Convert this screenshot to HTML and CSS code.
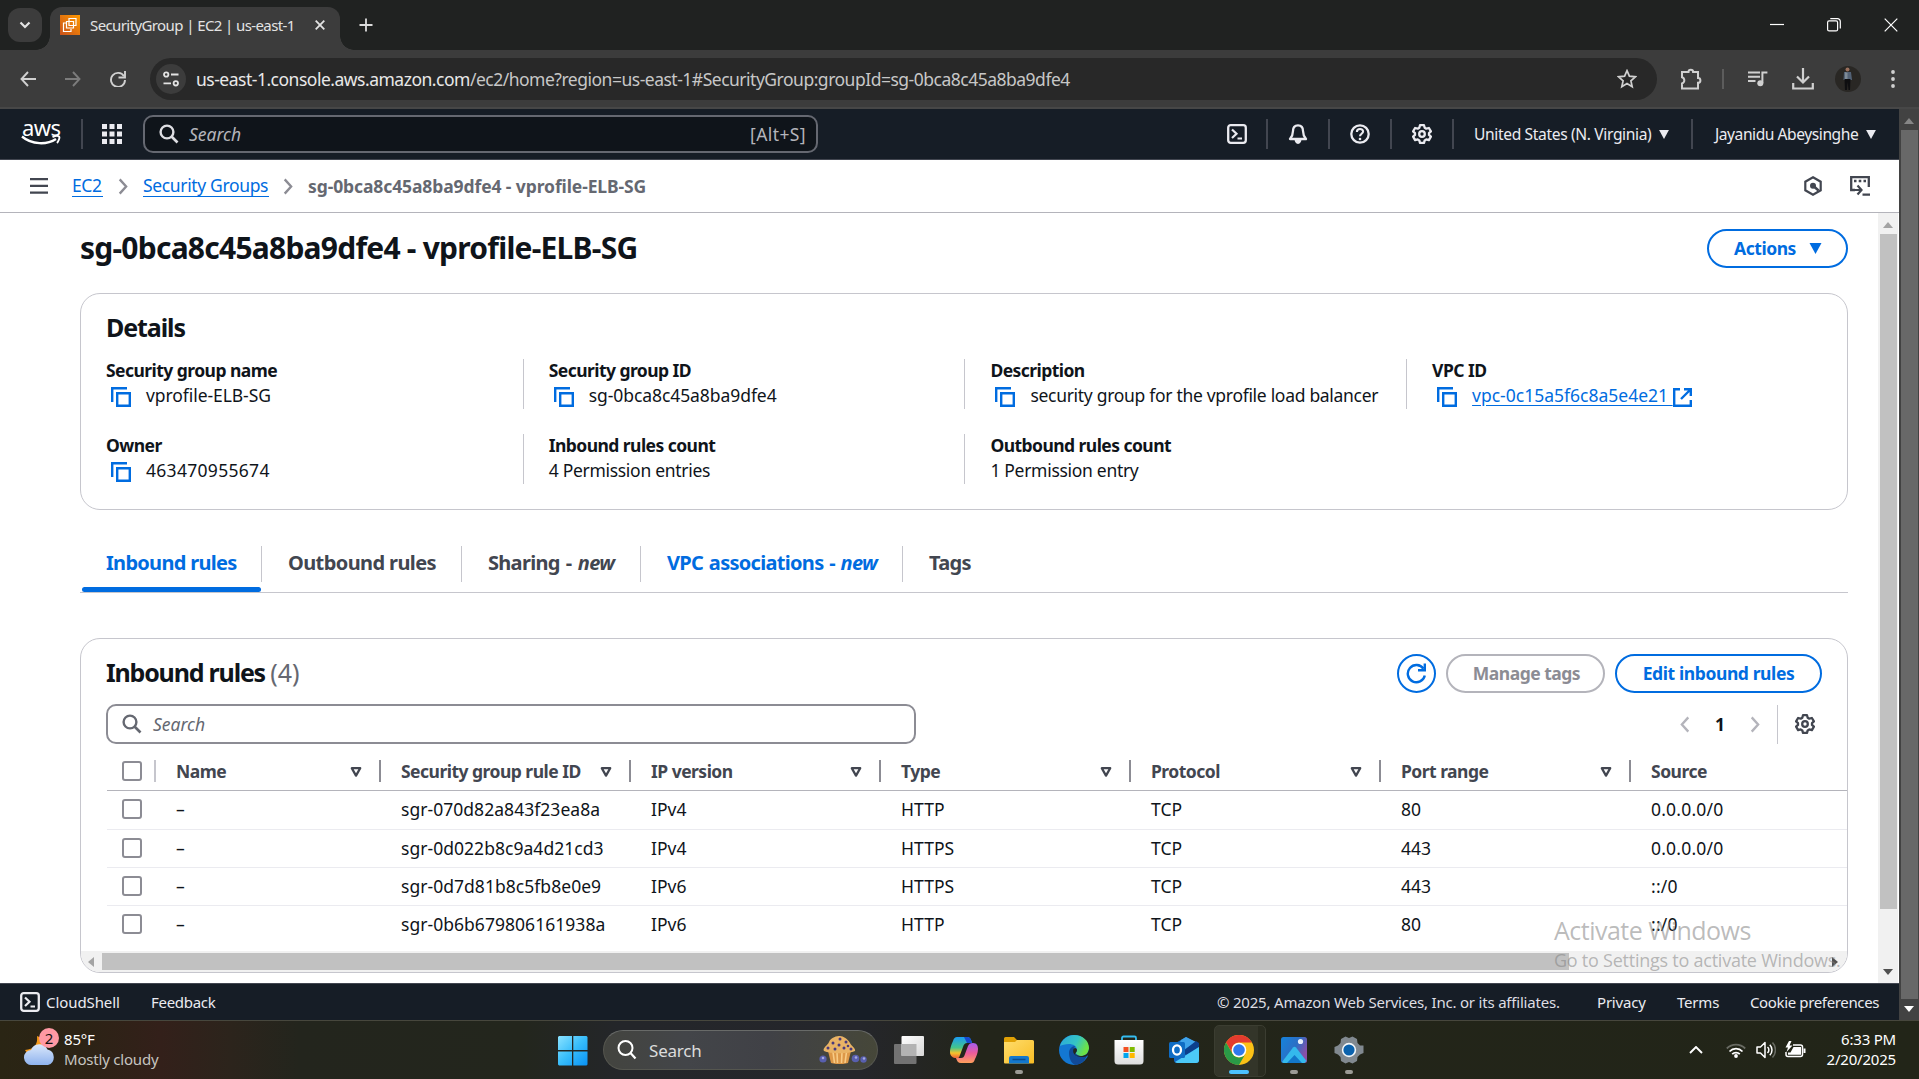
FILE: index.html
```html
<!DOCTYPE html>
<html lang="en">
<head>
<meta charset="utf-8">
<title>SecurityGroup | EC2 | us-east-1</title>
<link rel="stylesheet" href="styles.css">
</head>
<body>
<svg class="defs" width="0" height="0">
  <symbol id="copy" viewBox="0 0 20 20"><path d="M1.2 15V1.2H16" fill="none" stroke="currentColor" stroke-width="2.4"/><path d="M6.2 6.2h12.6v12.6H6.2z" fill="none" stroke="currentColor" stroke-width="2.4"/></symbol>
  <symbol id="search" viewBox="0 0 20 20"><circle cx="8" cy="8" r="6.4" fill="none" stroke="currentColor" stroke-width="2.4"/><path d="M12.5 12.5l6 6" stroke="currentColor" stroke-width="2.6"/></symbol>
  <symbol id="gear" viewBox="0 0 20 20"><path d="M8 1.2h4l.7 2.5 1.6 1 2.6-.7 2 3.4L17 9.200v1.700l1.900 1.800-2 3.400-2.600-.7-1.600 1-.7 2.500H8l-.7-2.500-1.600-1-2.600.7-2-3.400L3 10.900V9.200L1.100 7.400l2-3.400 2.600.7 1.600-1z" fill="none" stroke="currentColor" stroke-width="2.300" stroke-linejoin="round"/><circle cx="10" cy="10" r="2.800" fill="none" stroke="currentColor" stroke-width="2.300"/></symbol>
  <symbol id="shell" viewBox="0 0 20 20"><rect x="1.200" y="1.200" width="17.600" height="17.600" rx="2.500" fill="none" stroke="currentColor" stroke-width="2.300"/><path d="M5 5.500l4.500 4.300L5 14M10.500 14.500H15" fill="none" stroke="currentColor" stroke-width="2.200"/></symbol>
  <symbol id="down" viewBox="0 0 12 11"><path d="M0 0h12L6 11z" fill="currentColor"/></symbol>
  <symbol id="sort" viewBox="0 0 12 11"><path d="M1.800 1.200h8.400L6 8.600z" fill="none" stroke="currentColor" stroke-width="2.300" stroke-linejoin="round"/></symbol>
  <symbol id="chev" viewBox="0 0 10 18"><path d="M1.500 1.500L8.300 9l-6.800 7.500" fill="none" stroke="currentColor" stroke-width="2.500"/></symbol>
</svg>

<div class="screen">
  <header class="tabstrip">
    <div class="tab-search"><svg width="12" height="8" viewBox="0 0 12 8"><path d="M1.500 1.500L6 6l4.500-4.500" fill="none" stroke="#e3e3e3" stroke-width="2.200"/></svg></div>
    <div class="tab">
      <svg class="favicon" width="20" height="20" viewBox="0 0 20 20"><defs><linearGradient id="fav" x1="0" y1="1" x2="1" y2="0"><stop stop-color="#c8511b"/><stop offset="1" stop-color="#f90"/></linearGradient></defs><path d="M0 0h20v20H0z" fill="url(#fav)"/><path d="M9 3.500h7v7H9zM6.500 6.500h7v6.500h-7zM6 8H3.500v8.500H11V14" fill="none" stroke="#fff" stroke-width="1.200"/></svg>
      <span class="tab-title">SecurityGroup | EC2 | us-east-1</span>
      <svg class="tab-close" width="10" height="10" viewBox="0 0 10 10"><path d="M.7.7l8.600 8.600M9.300.7L.7 9.300" stroke="#e3e3e3" stroke-width="1.800"/></svg>
    </div>
    <svg class="new-tab" width="14" height="14" viewBox="0 0 14 14"><path d="M7 .5v13M.5 7h13" stroke="#dcdcdc" stroke-width="1.800"/></svg>
    <div class="window-buttons">
      <svg width="14" height="14" viewBox="0 0 14 14"><path d="M0 6.500h14" stroke="#fff" stroke-width="1.200"/></svg>
      <svg width="14" height="14" viewBox="0 0 14 14"><rect x=".6" y="2.900" width="10" height="10" rx="1.500" fill="none" stroke="#fff" stroke-width="1.200"/><path d="M3.300.7h7.200a2.700 2.700 0 0 1 2.800 2.700v7.200" fill="none" stroke="#fff" stroke-width="1.200"/></svg>
      <svg width="14" height="14" viewBox="0 0 14 14"><path d="M.7.7l12.600 12.600M13.300.7L.7 13.300" stroke="#fff" stroke-width="1.200"/></svg>
    </div>
  </header>

  <div class="toolbar">
    <svg class="nav-icon" width="16" height="16" viewBox="0 0 16 16"><path d="M8 1L1.500 8 8 15M1.500 8H16" fill="none" stroke="#d0d0d0" stroke-width="1.900"/></svg>
    <svg class="nav-icon dim" width="16" height="16" viewBox="0 0 16 16"><path d="M8 1l6.500 7L8 15M14.500 8H0" fill="none" stroke="#7c7c7c" stroke-width="1.900"/></svg>
    <svg class="nav-icon" width="16" height="16" viewBox="0 0 16 16"><path d="M14 5.300A7 7 0 1 0 15 9" fill="none" stroke="#d0d0d0" stroke-width="1.900"/><path d="M15 0v6.500H8.500" fill="none" stroke="#d0d0d0" stroke-width="1.900"/></svg>
    <div class="omnibox">
      <div class="site-info"><svg width="16" height="16" viewBox="0 0 16 16"><g fill="none" stroke="#e3e3e3" stroke-width="1.800"><circle cx="3.200" cy="3.500" r="2.200"/><path d="M8 3.500h7.500M.5 12.300H8"/><circle cx="12.800" cy="12.300" r="2.200"/></g></svg></div>
      <span class="url">us-east-1.console.aws.amazon.com<span class="url-path">/ec2/home?region=us-east-1#SecurityGroup:groupId=sg-0bca8c45a8ba9dfe4</span></span>
      <svg class="star" width="20" height="20" viewBox="0 0 20 20"><path d="M10 1.700l2.400 5.500 6 .6-4.500 4 1.300 5.900L10 14.600l-5.200 3.100 1.300-5.900-4.500-4 6-.6z" fill="none" stroke="#d0d0d0" stroke-width="1.700"/></svg>
    </div>
    <svg class="ext" width="22" height="22" viewBox="0 0 22 22"><path d="M2 4h6.500a2.300 2.300 0 0 1 4.600 0H18v6a2.400 2.400 0 0 1 0 4.800V20.500H2v-5a3.300 3.300 0 0 0 0-6.300z" fill="none" stroke="#d0d0d0" stroke-width="2"/></svg>
    <i class="tool-divider"></i>
    <svg class="music" width="20" height="16" viewBox="0 0 20 16"><path d="M0 1.500h12M0 5.700h12M0 9.900h7.500" stroke="#d0d0d0" stroke-width="2"/><circle cx="12.300" cy="12.300" r="3" fill="#d0d0d0"/><path d="M14.400 12V1.500h5" fill="none" stroke="#d0d0d0" stroke-width="2"/></svg>
    <svg class="download" width="22" height="22" viewBox="0 0 22 22"><path d="M11 0v14M5 8.500l6 6 6-6M1.200 15v5.500h19.600V15" fill="none" stroke="#d0d0d0" stroke-width="2.200"/></svg>
    <svg class="avatar" width="26" height="26" viewBox="0 0 26 26"><circle cx="13" cy="13" r="13" fill="#292724"/><circle cx="12.500" cy="3.500" r="2" fill="#99705d"/><path d="M9 6h7l1 8H8.500z" fill="#536276"/><path d="M10 6l2.500 1v6H10z" fill="#7f8c98"/><path d="M9.500 13h6l-.5 11h-1.500l-.8-8-.7 8h-2z" fill="#0e0e10"/></svg>
    <svg class="dots" width="4" height="18" viewBox="0 0 4 18"><g fill="#d0d0d0"><circle cx="2" cy="2" r="1.900"/><circle cx="2" cy="9" r="1.900"/><circle cx="2" cy="16" r="1.900"/></g></svg>
  </div>

  <div class="viewport">
    <div class="console">
      <nav class="aws-nav">
        <div class="aws-logo"><span>aws</span><svg width="40" height="11" viewBox="0 0 40 11"><path d="M1 1.500c10 8.500 25 8.500 34 2.500" fill="none" stroke="#fff" stroke-width="2.300"/><path d="M31.500 2c3-1.200 6-1.200 6.700-.3.700 1-.6 4.500-2.200 6.300" fill="none" stroke="#fff" stroke-width="1.900"/></svg></div>
        <i class="nav-rule first"></i>
        <svg class="apps" width="20" height="20" viewBox="0 0 20 20"><path d="M0 0h5v5H0zM7.500 0h5v5h-5zM15 0h5v5h-5zM0 7.500h5v5H0zM7.500 7.500h5v5h-5zM15 7.500h5v5h-5zM0 15h5v5H0zM7.500 15h5v5h-5zM15 15h5v5h-5z" fill="#ebebf0"/></svg>
        <div class="nav-search"><svg width="20" height="20"><use href="#search"/></svg><em>Search</em><span>[Alt+S]</span></div>
        <div class="nav-tools">
          <div class="tool"><svg width="20" height="20"><use href="#shell"/></svg></div>
          <div class="tool"><svg width="20" height="20" viewBox="0 0 20 20"><path d="M10 1.300c3.600 0 5 2.700 5 5.700 0 4 1 5.500 3 8H2c2-2.500 3-4 3-8 0-3 1.400-5.700 5-5.700z" fill="none" stroke="currentColor" stroke-width="2.300" stroke-linejoin="round"/><path d="M6.500 15.500c.3 2.300 1.300 4.500 3.500 4.500s3.200-2.200 3.500-4.500z" fill="currentColor"/></svg></div>
          <div class="tool"><svg width="20" height="20" viewBox="0 0 20 20"><circle cx="10" cy="10" r="8.700" fill="none" stroke="currentColor" stroke-width="2.300"/><path d="M6.900 8c0-4 6.200-4 6.200-.4 0 2-3.100 2.400-3.100 4.600" fill="none" stroke="currentColor" stroke-width="2.100"/><circle cx="10" cy="15" r="1.300" fill="currentColor"/></svg></div>
          <div class="tool"><svg width="20" height="20"><use href="#gear"/></svg></div>
          <div class="menu region"><span>United States (N. Virginia)</span><svg width="10" height="9"><use href="#down"/></svg></div>
          <div class="menu account"><span>Jayanidu Abeysinghe</span><svg width="10" height="9"><use href="#down"/></svg></div>
        </div>
      </nav>

      <div class="crumbs">
        <svg class="burger" width="18" height="16" viewBox="0 0 18 16"><path d="M0 1.200h18M0 7.900h18M0 14.600h18" stroke="#424650" stroke-width="2.300"/></svg>
        <a class="crumb-ec2">EC2</a>
        <svg class="sep" width="10" height="17"><use href="#chev"/></svg>
        <a class="crumb-groups">Security Groups</a>
        <svg class="sep" width="10" height="17"><use href="#chev"/></svg>
        <b>sg-0bca8c45a8ba9dfe4 - vprofile-ELB-SG</b>
        <svg class="hex" width="18" height="20" viewBox="0 0 18 20"><path d="M9 1.300l7.700 4.400v8.600L9 18.700l-7.700-4.400V5.700z" fill="none" stroke="#424650" stroke-width="2.200"/><circle cx="9" cy="9.800" r="3" fill="#424650"/><path d="M10 10.500l4.500 4" stroke="#424650" stroke-width="2.400"/></svg>
        <svg class="split" width="20" height="20" viewBox="0 0 20 20"><path d="M18.800 11V1.200H1.200V14H5" fill="none" stroke="#424650" stroke-width="2.300"/><path d="M4 5h2.500M8.700 5h2.600M13.500 5H16" stroke="#424650" stroke-width="2.500"/><path d="M4 14h7M7.500 9.500l4 4.500-4 4.500M12.500 18.700H20" fill="none" stroke="#424650" stroke-width="2.200"/></svg>
      </div>

      <div class="scroller">
        <main>
          <div class="title-row"><h1>sg-0bca8c45a8ba9dfe4 - vprofile-ELB-SG</h1><button class="btn actions"><span>Actions</span><svg width="13" height="11"><use href="#down"/></svg></button></div>

          <section class="card details">
            <h2>Details</h2>
            <div class="facts">
              <div class="fact"><b>Security group name</b><p><svg width="20" height="20"><use href="#copy"/></svg>vprofile-ELB-SG</p></div>
              <div class="fact"><b>Security group ID</b><p><svg width="20" height="20"><use href="#copy"/></svg>sg-0bca8c45a8ba9dfe4</p></div>
              <div class="fact"><b>Description</b><p class="words"><svg width="20" height="20"><use href="#copy"/></svg>security group for the vprofile load balancer</p></div>
              <div class="fact"><b>VPC ID</b><p class="link"><svg width="20" height="20"><use href="#copy"/></svg><a>vpc-0c15a5f6c8a5e4e21&nbsp;</a><svg class="external" width="19" height="19" viewBox="0 0 19 19"><path d="M7 1.200H1.200v16.600h16.600V12M11 1.200h6.800V8M17.500 1.500L8 11" fill="none" stroke="currentColor" stroke-width="2.400"/></svg></p></div>
              <div class="fact"><b>Owner</b><p class="number"><svg width="20" height="20"><use href="#copy"/></svg>463470955674</p></div>
              <div class="fact"><b>Inbound rules count</b><p class="words">4 Permission entries</p></div>
              <div class="fact"><b>Outbound rules count</b><p class="words">1 Permission entry</p></div>
            </div>
          </section>

          <div class="tabs">
            <a class="t1 active">Inbound rules</a><a class="t2">Outbound rules</a><a class="t3">Sharing - <i>new</i></a><a class="t4">VPC associations - <i>new</i></a><a class="t5">Tags</a>
          </div>

          <section class="card rules">
            <div class="rules-head">
              <h2>Inbound rules <span>(4)</span></h2>
              <button class="btn round"><svg width="21" height="21" viewBox="0 0 21 21"><path d="M18.800 12.500A8.600 8.600 0 1 1 17.500 5.800" fill="none" stroke="currentColor" stroke-width="2.400"/><path d="M18.800.500v6.700H12" fill="none" stroke="currentColor" stroke-width="2.400"/></svg></button>
              <button class="btn manage">Manage tags</button>
              <button class="btn edit">Edit inbound rules</button>
            </div>
            <div class="filter-row">
              <div class="filter"><svg width="20" height="20"><use href="#search"/></svg><em>Search</em></div>
              <div class="pager"><svg class="prev" width="10" height="17"><use href="#chev"/></svg><b>1</b><svg width="10" height="17"><use href="#chev"/></svg></div>
              <div class="prefs"><svg width="20" height="20"><use href="#gear"/></svg></div>
            </div>
            <div class="grid">
              <div class="row head"><span class="check"><i></i></span><span>Name<svg width="12" height="11"><use href="#sort"/></svg></span><span>Security group rule ID<svg width="12" height="11"><use href="#sort"/></svg></span><span>IP version<svg width="12" height="11"><use href="#sort"/></svg></span><span>Type<svg width="12" height="11"><use href="#sort"/></svg></span><span>Protocol<svg width="12" height="11"><use href="#sort"/></svg></span><span>Port range<svg width="12" height="11"><use href="#sort"/></svg></span><span>Source</span></div>
              <div class="row first"><span class="check"><i></i></span><span>–</span><span>sgr-070d82a843f23ea8a</span><span>IPv4</span><span>HTTP</span><span>TCP</span><span>80</span><span>0.0.0.0/0</span></div>
              <div class="row"><span class="check"><i></i></span><span>–</span><span>sgr-0d022b8c9a4d21cd3</span><span>IPv4</span><span>HTTPS</span><span>TCP</span><span>443</span><span>0.0.0.0/0</span></div>
              <div class="row"><span class="check"><i></i></span><span>–</span><span>sgr-0d7d81b8c5fb8e0e9</span><span>IPv6</span><span>HTTPS</span><span>TCP</span><span>443</span><span>::/0</span></div>
              <div class="row"><span class="check"><i></i></span><span>–</span><span>sgr-0b6b679806161938a</span><span>IPv6</span><span>HTTP</span><span>TCP</span><span>80</span><span>::/0</span></div>
            </div>
            <div class="hscroll"><svg width="6" height="10" viewBox="0 0 6 10"><path d="M6 0v10L0 5z" fill="#a3a3a3"/></svg><i></i><svg width="6" height="10" viewBox="0 0 6 10"><path d="M0 0v10l6-5z" fill="#505050"/></svg></div>
          </section>
        </main>
        <div class="vscroll inner"><svg width="10" height="6" viewBox="0 0 10 6"><path d="M0 6h10L5 0z" fill="#a3a3a3"/></svg><i></i><svg width="10" height="6" viewBox="0 0 10 6"><path d="M0 0h10L5 6z" fill="#505050"/></svg></div>
      </div>

      <footer>
        <svg width="20" height="20"><use href="#shell"/></svg><span class="f-shell">CloudShell</span><span class="f-feedback">Feedback</span>
        <span class="f-copy">© 2025, Amazon Web Services, Inc. or its affiliates.</span><span class="f-privacy">Privacy</span><span class="f-terms">Terms</span><span class="f-cookie">Cookie preferences</span>
      </footer>
    </div>
    <div class="vscroll outer"><svg width="10" height="6" viewBox="0 0 10 6"><path d="M0 6h10L5 0z" fill="#868686"/></svg><i></i><svg width="10" height="6" viewBox="0 0 10 6"><path d="M0 0h10L5 6z" fill="#fff"/></svg></div>
  </div>

  <div class="taskbar">
    <div class="weather">
      <svg width="36" height="38" viewBox="0 0 36 38"><defs><linearGradient id="cl" x1="0" y1="0" x2="0" y2="1"><stop stop-color="#dbe8fb"/><stop offset="1" stop-color="#8fb3ee"/></linearGradient></defs><path d="M13 7c1 9-3 13-12 14 3 6 11 8 16 4s6-14-4-18z" fill="#f59a1b"/><path d="M8 36a7.500 7.500 0 0 1-1-15 9 9 0 0 1 16.500-.5A8 8 0 0 1 24 36z" fill="url(#cl)"/></svg>
      <b class="badge">2</b>
      <div class="weather-text"><span>85°F</span><span class="muted">Mostly cloudy</span></div>
    </div>
    <svg class="start" width="30" height="30" viewBox="0 0 30 30"><defs><linearGradient id="win" x1="0" y1="0" x2="29" y2="29" gradientUnits="userSpaceOnUse"><stop stop-color="#8be3ff"/><stop offset=".5" stop-color="#38bdfb"/><stop offset="1" stop-color="#0a93f5"/></linearGradient></defs><path d="M1 0H14v14H0V1zM15.300 0H28.500l1 1V14H15.300zM0 15.400h14v14H1l-1-1zM15.300 15.400h14.200v13l-1 1H15.300z" fill="url(#win)"/></svg>
    <div class="task-search">
      <svg width="20" height="20" viewBox="0 0 20 20"><circle cx="8.500" cy="8" r="7" fill="none" stroke="#fff" stroke-width="2"/><path d="M13.500 13l5 5.500" stroke="#fff" stroke-width="2.200"/></svg><span>Search</span>
      <svg class="muffin" width="48" height="28" viewBox="0 0 48 28"><path d="M9 15h23l-3 12c-4 1.500-13 1.500-17 0z" fill="#dd9848"/><path d="M14 16l1.500 11M18 16l.5 11M23 16l-.5 11M27.500 16L26 27" stroke="#f8cb86" stroke-width="1.600"/><path d="M5 15C3 12 9 9 10 6c2-5 8-6 11-6s8 3 10 7c1 3 6 5 5 8-6 3-25 3-31 0z" fill="#e9b365"/><g fill="#4b3b7c"><circle cx="14" cy="7" r="1.500"/><circle cx="21" cy="3" r="1.500"/><circle cx="20" cy="9" r="1.500"/><circle cx="27" cy="6" r="1.500"/><circle cx="9" cy="12" r="1.500"/><circle cx="16" cy="13" r="1.500"/><circle cx="25" cy="12" r="1.500"/><circle cx="32" cy="13" r="1.500"/><circle cx="29" cy="10" r="1.300"/></g><g fill="#585fae"><circle cx="4" cy="23" r="3.600"/><circle cx="36.500" cy="22.500" r="3.800"/><circle cx="44.500" cy="23.500" r="3.200"/></g><g fill="#a5a9e2"><circle cx="4" cy="22" r="1.300"/><circle cx="37" cy="21.500" r="1.300"/><circle cx="45" cy="22.500" r="1.200"/></g></svg>
    </div>
    <div class="apps-row">
      <div class="app"><svg width="30" height="30" viewBox="0 0 30 30"><defs><linearGradient id="tv" x1="0" y1="0" x2="1" y2="1"><stop stop-color="#fff"/><stop offset="1" stop-color="#d7d7d7"/></linearGradient></defs><rect x="0" y="9" width="22.500" height="20" rx="1" fill="#727272"/><rect x="7.500" y="1" width="22.500" height="20" rx="1" fill="url(#tv)"/><path d="M7.500 9h15v12h-15z" fill="#b3b3b3"/></svg></div>
      <div class="app"><svg width="30" height="30" viewBox="0 0 30 30"><defs><linearGradient id="cp1" x1="0" y1="0" x2="0" y2="1"><stop stop-color="#1b9cf3"/><stop offset=".5" stop-color="#44c58b"/><stop offset=".75" stop-color="#f5c42c"/><stop offset="1" stop-color="#ef5b3a"/></linearGradient><linearGradient id="cp2" x1="0" y1="0" x2="0" y2="1"><stop stop-color="#a45cf0"/><stop offset=".5" stop-color="#ed5a9b"/><stop offset="1" stop-color="#ffa05a"/></linearGradient></defs><path d="M8 2h10c3 0 4 2 5 6h-5c-2 0-3 1-4 4l-3 8c-1 3-2 4-4 3-3 0-6-2-6-6 0-4 2-9 3-11C5 3 6 2 8 2z" fill="url(#cp1)"/><path d="M15 2h3c3 0 4 2 5 6h-5z" fill="#174ad0"/><path d="M22 28H12c-3 0-4-2-5-5h5c2 0 3-1 4-4l3-8c1-2 2-3 5-3 4 0 5 3 5 6 0 4-2 8-3 10-1 3-2 4-4 4z" fill="url(#cp2)"/></svg></div>
      <div class="app running"><svg width="30" height="30" viewBox="0 0 30 30"><defs><linearGradient id="fo" x1="0" y1="0" x2="1" y2="1"><stop stop-color="#ffdd6c"/><stop offset="1" stop-color="#f8bd25"/></linearGradient></defs><path d="M0 3.500A1.500 1.500 0 0 1 1.500 2H10l3 3v6H0z" fill="#e0a105"/><path d="M0 7h11l2-2h15.500A1.500 1.500 0 0 1 30 6.500v21a1 1 0 0 1-1 1H1a1 1 0 0 1-1-1z" fill="url(#fo)"/><path d="M5 28.500V23a2 2 0 0 1 2-2h16a2 2 0 0 1 2 2v5.500z" fill="#1378cd"/><path d="M8.500 24.500h13" stroke="#0a4c8f" stroke-width="1.500"/></svg></div>
      <div class="app"><svg width="30" height="30" viewBox="0 0 30 30"><defs><linearGradient id="ed" x1="0" y1="0" x2="1" y2=".4"><stop stop-color="#2ba7dd"/><stop offset=".6" stop-color="#35c4c4"/><stop offset="1" stop-color="#6de246"/></linearGradient></defs><circle cx="15" cy="15" r="15" fill="#1377d2"/><path d="M1 11C3 4 9 0 15 0c9 0 15 6 15 13 0 5-4 8-8 8-4 0-6-1-6-2 0-1 2-1.500 2-4 0-4-4-6-8-6-4 0-7 1-9 2z" fill="url(#ed)"/><path d="M10 18c0-4 3-7 6-7-1 2-1 4 0 6 2 4 7 6 12 3.500C26 26 21 30 16 30c-4-2-6-7-6-12z" fill="#114a98"/><path d="M14.500 14c-1.500 4 1.500 8 8.500 8 2 0 4-.5 5.500-1.500l1.500.5V14c-1 5-4 7-8 7-4 0-6-1-6-2 0-1 2-1.500 2-4 0-1-1-2-2-2z" fill="#23251b"/></svg></div>
      <div class="app"><svg width="30" height="30" viewBox="0 0 30 30"><defs><linearGradient id="st" x1="0" y1="0" x2="0" y2="1"><stop stop-color="#fff"/><stop offset="1" stop-color="#dedede"/></linearGradient></defs><path d="M8 6V3a1.500 1.500 0 0 1 1.500-1.500h11A1.500 1.500 0 0 1 22 3v3" fill="none" stroke="#35bdf0" stroke-width="1.800"/><path d="M.5 5h29v21a3.500 3.500 0 0 1-3.500 3.500H4A3.500 3.500 0 0 1 .5 26z" fill="url(#st)"/><path d="M9.500 12h5v5h-5z" fill="#f25022"/><path d="M15.700 12h5v5h-5z" fill="#7fba00"/><path d="M9.500 18h5v5h-5z" fill="#00a4ef"/><path d="M15.700 18h5v5h-5z" fill="#ffb900"/></svg></div>
      <div class="app"><svg width="30" height="30" viewBox="0 0 30 30"><path d="M5 9L17 2l13 7v16a3 3 0 0 1-3 3H8a3 3 0 0 1-3-3z" fill="#1169c4"/><path d="M12 5l5-3 10 5-14 9-4-5z" fill="#3fa3ea"/><path d="M13 17L27 6l3 2v4L17 20z" fill="#0c3f8c"/><path d="M6 27l24-15v13a3 3 0 0 1-3 3H8z" fill="#4cc9f7"/><rect x="0" y="7" width="16" height="16" rx="1.500" fill="#0f6cc4"/><ellipse cx="8" cy="15" rx="4" ry="4.700" fill="none" stroke="#fff" stroke-width="2.300"/></svg></div>
      <div class="app current"><svg width="30" height="30" viewBox="0 0 30 30"><circle cx="15" cy="15" r="15" fill="#fbc116"/><path d="M2 7.500A15 15 0 0 1 28 7.500H15a7.500 7.500 0 0 0-6.500 11z" fill="#e33b2e"/><path d="M2 7.500L8.500 18.800A7.500 7.500 0 0 0 21.500 18.800L15 30A15 15 0 0 1 2 7.500z" fill="#2a9a47"/><circle cx="15" cy="15" r="7.300" fill="#fff"/><circle cx="15" cy="15" r="5.800" fill="#3079ed"/></svg></div>
      <div class="app running"><svg width="30" height="30" viewBox="0 0 30 30"><defs><linearGradient id="ph" x1="0" y1="0" x2="1" y2=".5"><stop stop-color="#1583dc"/><stop offset=".6" stop-color="#2c6ec4"/><stop offset="1" stop-color="#8a4fa8"/></linearGradient></defs><rect x="2" y="2" width="26" height="26" rx="2.500" fill="url(#ph)"/><path d="M3 27L14 12.500a2 2 0 0 1 3 0L27.500 26l-2 2h-21z" fill="#34b9ec"/><path d="M8 28l7.500-8 7.500 8z" fill="#1377c9"/><circle cx="21.500" cy="6.500" r="2.600" fill="#e7effb"/></svg></div>
      <div class="app running"><svg width="30" height="30" viewBox="0 0 30 30"><path d="M11.500 1.500L15 3l3.500-1.500 4.500 2.500.5 4 2.500 2.500h3.500v7.500L26 19.500 23.500 22l-.5 4-4.500 2.500L15 27l-3.500 1.500L7 26l-.5-4L4 19.500.5 18v-6L4 10.500 6.500 8 7 4z" fill="#818990"/><circle cx="15" cy="15" r="7.200" fill="#f4f8fb"/><circle cx="15" cy="15" r="5.600" fill="#0b62ad"/></svg></div>
    </div>
    <div class="tray">
      <svg width="14" height="8" viewBox="0 0 14 8"><path d="M1 7l6-6 6 6" fill="none" stroke="#fff" stroke-width="1.900"/></svg>
      <svg class="wifi" width="20" height="15" viewBox="0 0 20 15"><g fill="none" stroke-width="1.800"><path d="M.8 5.500a13 13 0 0 1 18.400 0" stroke="#686a62"/><path d="M3.500 8.500a9 9 0 0 1 13 0M6.200 11.200a5.300 5.300 0 0 1 7.600 0" stroke="#fff"/></g><circle cx="10" cy="13" r="1.900" fill="#fff"/></svg>
      <svg class="speaker" width="20" height="18" viewBox="0 0 20 18"><path d="M1 6h3.500L9 1.500v15L4.500 12H1z" fill="none" stroke="#fff" stroke-width="1.500" stroke-linejoin="round"/><path d="M11.500 6a4 4 0 0 1 0 6M13.800 3.700a7.500 7.500 0 0 1 0 10.600" fill="none" stroke="#fff" stroke-width="1.500"/><path d="M16.500 1.500a11 11 0 0 1 0 15" fill="none" stroke="#686a62" stroke-width="1.500"/></svg>
      <svg class="battery" width="21" height="18" viewBox="0 0 21 18"><path d="M8 4h7.500A2 2 0 0 1 17.500 6v7.500a2 2 0 0 1-2 2H3a2 2 0 0 1-2-2V11" fill="none" stroke="#fff" stroke-width="1.500"/><path d="M8.500 6H16v7.700H3V11.500h2.500z" fill="#fff"/><path d="M19.500 7.500v4.500" stroke="#fff" stroke-width="2"/><path d="M4 0L.5 6.500H3L1.500 11 7.500 4.500H4.500L6.500 0z" fill="#fff"/></svg>
      <div class="clock"><span>6:33 PM</span><span>2/20/2025</span></div>
    </div>
  </div>

  <div class="watermark"><span class="w1">Activate Windows</span><span class="w2">Go to Settings to activate Windows.</span></div>
</div>
</body>
</html>
```
FILE: styles.css
```css
* { box-sizing: border-box; }
body { margin: 0; overflow: hidden; font-family: "Noto Sans", sans-serif; font-size: 17.5px; color: #0f141a; }
svg { display: block; flex: none; }
.defs { position: absolute; }
button { font: inherit; }
h1, h2, p { margin: 0; }
.screen { position: relative; width: 1919px; height: 1079px; display: flex; flex-direction: column; white-space: nowrap; background: #fff; }

/* Browser chrome */
.tabstrip { height: 50px; background: #202221; display: flex; align-items: flex-end; padding-left: 8px; color: #e3e3e3; }
.tab-search { width: 34px; height: 34px; margin-bottom: 8px; border-radius: 12px; background: #3c3c3c; display: flex; align-items: center; justify-content: center; }
.tab { position: relative; width: 290px; height: 43px; margin-left: 8px; border-radius: 12px 12px 0 0; background: #3c3c3c; display: flex; align-items: center; padding: 0 15px 7px 10px; }
.tab::before, .tab::after { content: ""; position: absolute; bottom: 0; width: 14px; height: 14px; }
.tab::before { left: -14px; background: radial-gradient(circle at 0 0, transparent 13.5px, #3c3c3c 14px); }
.tab::after { right: -14px; background: radial-gradient(circle at 100% 0, transparent 13.5px, #3c3c3c 14px); }
.tab-title { margin-left: 10px; flex: 1; font-size: 15px; letter-spacing: -.6px; }
.new-tab { margin: 0 0 18px 19px; }
.window-buttons { margin-left: auto; display: flex; gap: 43px; padding: 0 21px 18px 0; }
.toolbar { height: 59px; background: #3c3c3c; border-bottom: 2px solid #474747; display: flex; align-items: center; padding-left: 20px; }
.nav-icon { margin-right: 29px; }
.nav-icon + .nav-icon + .nav-icon { margin-right: 24px; }
.omnibox { width: 1507px; height: 42px; border-radius: 21px; background: #282828; display: flex; align-items: center; padding: 0 20px 0 6px; }
.site-info { width: 30px; height: 30px; border-radius: 15px; background: #3c3c3c; display: flex; align-items: center; justify-content: center; }
.url { margin-left: 10px; flex: 1; font-size: 17.5px; letter-spacing: -.495px; color: #e8e8e8; }
.url-path { color: #c7c7c7; }
.ext { margin-left: 23px; }
.tool-divider { width: 2px; height: 20px; margin-left: 20px; background: #5c5c5c; }
.music { margin-left: 24px; }
.download { margin-left: 24px; }
.avatar { margin-left: 21px; }
.dots { margin-left: 30px; }

/* Console frame */
.viewport { height: 911px; display: flex; }
.console { width: 1899px; display: flex; flex-direction: column; }
.aws-nav { height: 51px; background: #161d26; border-bottom: 1px solid #424650; display: flex; align-items: center; padding-left: 21px; color: #ebebf0; }
.aws-logo { width: 40px; display: flex; flex-direction: column; color: #fff; font-size: 22px; line-height: 17px; letter-spacing: -.6px; }
.aws-logo span { padding-left: 1px; height: 16px; margin-top: -3px; }
.nav-rule { width: 2px; height: 30px; margin-left: 20px; background: #424650; }
.apps { margin-left: 19px; }
.nav-search { margin-left: 21px; width: 675px; height: 38px; border: 2px solid #656871; border-radius: 10px; background: #0f141a; display: flex; align-items: center; padding: 0 10px 0 14px; color: #b4b4bb; }
.nav-search svg { color: #dedee3; }
.nav-search em { margin-left: 10px; flex: 1; }
.nav-search span { letter-spacing: .4px; }
.nav-tools { margin-left: auto; display: flex; align-items: center; font-size: 15.6px; }
.tool { width: 62px; height: 30px; display: flex; align-items: center; justify-content: center; border-right: 2px solid #424650; }
.tool:first-child { padding-left: 2px; }
.menu { height: 30px; display: flex; align-items: center; letter-spacing: -.36px; }
.menu svg { margin-left: auto; }
.region { width: 239px; padding: 0 22px 0 20px; border-right: 2px solid #424650; }
.account { width: 206px; padding: 0 23px 0 22px; letter-spacing: -.45px; }
.crumbs { height: 53px; border-bottom: 1px solid #b4b4bb; display: flex; align-items: center; padding: 0 29px 0 30px; color: #656871; }
.crumbs a { color: #006ce0; border-bottom: 1px solid #006ce0; line-height: 21px; }
.crumb-ec2 { width: 31px; margin-left: 24px; letter-spacing: -.4px; }
.crumb-groups { width: 126px; letter-spacing: -.35px; }
.sep { margin: 0 15px; color: #8c8c94; }
.crumb-groups + .sep { margin-left: 14px; }
.crumbs b { flex: 1; font-weight: 700; letter-spacing: -.1px; }
.split { margin-left: 28px; }
.scroller { height: 770px; display: flex; }
main { width: 1878px; padding: 16px 30px 10px 80px; display: flex; flex-direction: column; }
.title-row { height: 39px; display: flex; align-items: center; justify-content: space-between; }
h1 { font-size: 30px; letter-spacing: -.76px; line-height: 39px; margin-top: -3px; }
.btn { height: 39px; border: 2px solid #006ce0; border-radius: 20px; background: #fff; color: #006ce0; font-weight: 700; display: flex; align-items: center; justify-content: center; padding: 0 0 2px; letter-spacing: -.45px; }
.actions { width: 141px; gap: 13px; padding-left: 1px; }
.actions svg { margin-top: 2px; }
.card { border: 1px solid #c6c6cd; border-radius: 20px; }
.details { height: 217px; margin-top: 25px; padding: 16px 0 0 25px; }
h2 { font-size: 25px; line-height: 34px; letter-spacing: -1.1px; }
.facts { display: grid; grid-template-columns: repeat(4, 441.7px); row-gap: 25px; margin-top: 15px; }
.fact { height: 50px; line-height: 24px; }
.fact b { display: block; margin-top: -1px; letter-spacing: -.55px; }
.fact p { display: flex; align-items: center; height: 26px; letter-spacing: -.07px; }
.fact .words { letter-spacing: -.3px; }
.fact .number { letter-spacing: .3px; }
.fact .link { letter-spacing: 0; }
.fact p svg:first-child { color: #006ce0; margin: 4px 15px 0 5px; }
.fact a { color: #006ce0; text-decoration: underline; text-underline-offset: 3px; }
.fact .external { color: #006ce0; margin-top: 4px; }
.fact:nth-child(4n+2), .fact:nth-child(4n+3), .fact:nth-child(4n) { border-left: 1px solid #c6c6cd; margin-left: -25px; padding-left: 25px; }
.tabs { height: 53px; margin-top: 30px; border-bottom: 1px solid #c6c6cd; padding-left: 2px; display: flex; align-items: stretch; font-size: 20px; font-weight: 700; color: #424650; letter-spacing: -.7px; line-height: 34px; }
.tabs a { position: relative; padding: 6px 0 0 26px; }
.tabs a:not(:last-child)::after { content: ""; position: absolute; right: 0; top: 6px; height: 36px; border-right: 1px solid #c6c6cd; }
.tabs .t1 { width: 180px; padding-left: 24px; }
.tabs .t1::before { content: ""; position: absolute; left: 0; bottom: 0; width: 179px; height: 5px; border-radius: 3px; background: #006ce0; }
.t2 { width: 200px; letter-spacing: -.6px; }
.t3 { width: 179px; word-spacing: 1.7px; }
.t4 { width: 262px; word-spacing: 1.2px; }
.tabs .active, .t4 { color: #006ce0; }
.rules { height: 335px; margin-top: 45px; display: flex; flex-direction: column; overflow: hidden; }
.rules-head { height: 54px; margin-top: 15px; padding: 0 25px; display: flex; align-items: flex-start; gap: 10px; }
.rules-head h2 { flex: 1; line-height: 37px; letter-spacing: -1.2px; }
.rules-head h2 span { font-weight: 400; color: #656871; letter-spacing: 0; }
.round { width: 39px; }
.round svg { margin-top: 2px; }
.manage { width: 159px; padding-left: 2px; letter-spacing: -.5px; color: #8c8c94; border-color: #b4b4bb; }
.edit { width: 207px; letter-spacing: -.4px; }
.filter-row { height: 40px; margin-top: -4px; padding: 0 25px; display: flex; align-items: center; }
.filter { width: 810px; height: 40px; border: 2px solid #8c8c94; border-radius: 10px; display: flex; align-items: center; padding-left: 14px; gap: 11px; color: #656871; }
.pager { margin-left: auto; display: flex; align-items: center; gap: 25px; color: #b4b4bb; }
.pager b { color: #0f141a; }
.prev { transform: scaleX(-1); }
.prefs { margin-left: 17px; height: 39px; border-left: 1px solid #c6c6cd; padding: 0 7px 0 17px; display: flex; align-items: center; color: #424650; }
.grid { margin-left: 26px; margin-top: 8px; }
.row { height: 38px; display: grid; grid-template-columns: 49px 225px repeat(5, 250px) 210px; align-items: center; padding-bottom: 2px; border-bottom: 1px solid #ebebf0; }
.row:last-child { border: 0; padding-bottom: 3px; }
.row span { display: flex; align-items: center; padding-left: 20px; letter-spacing: .04px; }
.row span:last-child { letter-spacing: .2px; }
.row .check { padding-left: 15px; }
.check i { width: 20px; height: 20px; border: 2px solid #8c8c94; border-radius: 3px; background: #fff; }
.first.row { height: 39px; }
.head.row { height: 39px; padding-bottom: 0; color: #424650; font-weight: 700; border-bottom: 1px solid #b4b4bb; }
.head span { height: 22px; border-right: 2px solid #8c8c94; letter-spacing: -.52px; }
.head span:last-child { border: 0; letter-spacing: -.5px; }
.head .check { border-color: #c6c6cd; }
.head svg { margin: 3px 17px 0 auto; }
.hscroll { height: 21px; margin-top: auto; background: #f1f1f1; display: flex; align-items: center; padding: 0 9px 0 7px; }
.hscroll i { width: 1467px; height: 17px; margin: 0 auto 0 8px; background: #c1c1c1; }
.vscroll { display: flex; flex-direction: column; align-items: center; }
.inner { width: 20px; background: #f1f1f1; padding: 9px 0 8px; }
.inner i { width: 17px; height: 675px; margin: 6px 0 auto; background: #c1c1c1; }
.outer { width: 20px; background: #424242; padding: 9px 0 8px; }
.outer i { width: 17px; height: 869px; margin: 6px 0 auto; background: #686868; }
footer { height: 37px; background: #161d26; border-top: 1px solid #424650; display: flex; align-items: center; padding-left: 20px; color: #ebebf0; font-size: 15px; letter-spacing: -.2px; }
.f-shell { width: 105px; margin-left: 6px; letter-spacing: -.08px; }
.f-feedback { letter-spacing: -.3px; }
.f-copy { margin-left: auto; width: 380px; color: #dedee3; }
.f-privacy { width: 80px; }
.f-terms { width: 73px; }
.f-cookie { width: 149px; letter-spacing: -.36px; }

/* Windows taskbar */
.taskbar { height: 59px; border-top: 1px solid #47473d; background: linear-gradient(90deg, #2a2514 0, #2c2315 80px, #33201a 160px, #2c241c 230px, #23251d 300px, #23261d 520px, #24262a 620px, #25262b 860px, #23251a 980px, #222518 100%); display: flex; align-items: center; padding-left: 24px; color: #fff; font-size: 15px; }
.weather { position: relative; display: flex; align-items: center; width: 534px; }
.weather > svg { margin-top: -5px; }
.badge { position: absolute; left: 15px; top: -3px; width: 20px; height: 20px; border-radius: 10px; background: #ff99a4; color: #111; font-weight: 400; text-align: center; line-height: 20px; font-size: 15px; }
.weather-text { margin: -2px 0 0 4px; display: flex; flex-direction: column; line-height: 20px; letter-spacing: -.2px; }
.muted { color: #c6c4c0; }
.start { margin-top: 1px; }
.task-search { width: 275px; height: 40px; margin-left: 15px; border-radius: 20px; background: linear-gradient(90deg, #43443f, #434549 30%, #404146 60%, #464739); border: 1px solid #55564f; border-top-color: #686a68; display: flex; align-items: center; padding: 0 10px 0 13px; color: #dcdcdc; font-size: 17px; letter-spacing: -.2px; }
.task-search span { margin-left: 12px; flex: 1; }
.apps-row { margin-left: 6px; display: flex; gap: 5px; }
.app { position: relative; width: 50px; height: 50px; display: flex; align-items: center; justify-content: center; }
.running::after, .current::after { content: ""; position: absolute; bottom: 1px; width: 8px; height: 4px; border-radius: 2px; background: #9b9b95; }
.current::after { width: 20px; background: #4cc2ff; }
.current::before { content: ""; position: absolute; z-index: 0; left: 0; top: 0; width: 50px; height: 50px; border: 1px solid #3b3d31; border-radius: 5px; background: linear-gradient(90deg, #333529 43px, #2a2c20 43px); }
.app svg { position: relative; }
.tray { margin-left: auto; padding-right: 23px; display: flex; align-items: center; }
.wifi { margin-left: 23px; }
.speaker { margin-left: 10px; }
.battery { margin-left: 9px; }
.clock { width: 90px; margin-top: -2px; text-align: right; display: flex; flex-direction: column; line-height: 20px; letter-spacing: -.2px; }

.watermark { position: absolute; left: 1554px; top: 911px; display: flex; flex-direction: column; font-family: "Open Sans", sans-serif; color: rgba(130, 130, 130, .55); }
.w1 { font-size: 25px; line-height: 38px; letter-spacing: -.52px; }
.w2 { font-size: 18px; line-height: 22px; letter-spacing: -.24px; }
```
